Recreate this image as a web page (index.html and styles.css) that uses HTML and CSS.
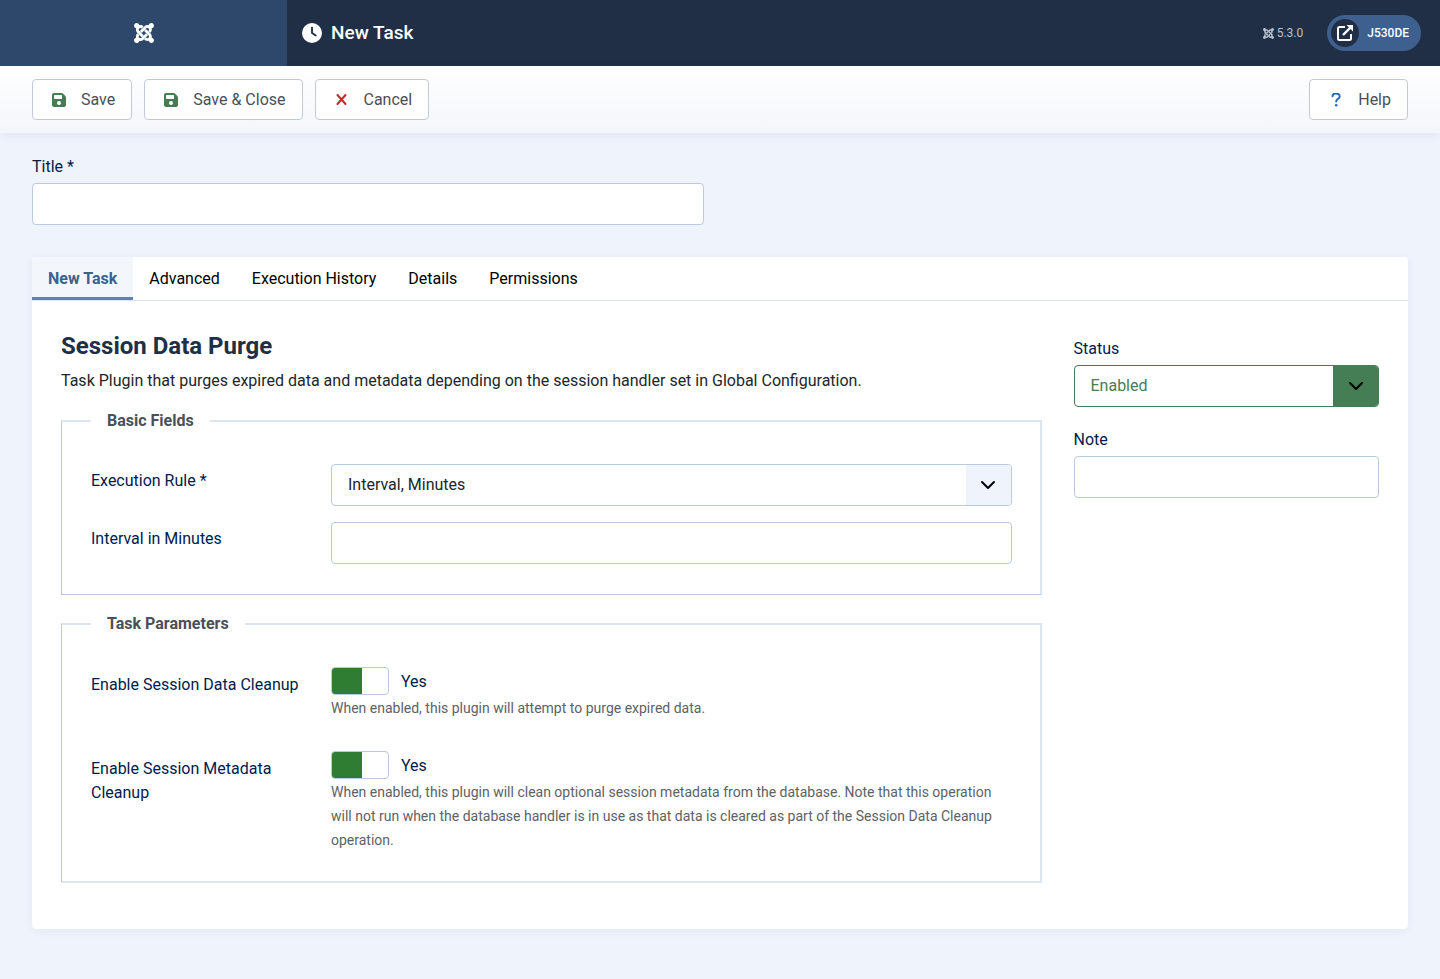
FILE: index.html
```html
<!DOCTYPE html>
<html lang="en">
<head>
<meta charset="utf-8">
<title>New Task</title>
<link rel="stylesheet" href="styles.css">
</head>
<body>
<svg class="defs" aria-hidden="true">
  <symbol id="joomla" viewBox="0 32 448 448"><path fill="currentColor" d="M.6 92.1C.6 58.8 27.4 32 60.4 32c30 0 54.5 21.9 59.2 50.2 32.6-7.6 67.1.6 96.5 30l-44.3 44.3c-20.5-20.5-42.6-16.3-55.4-3.5-14.3 14.3-14.3 37.9 0 52.2l99.5 99.5-44 44.3c-87.7-87.2-49.7-49.7-99.8-99.7-26.8-26.5-35-64.8-24.8-98.9C20.4 144.6.6 120.7.6 92.1zm129.5 116.4l44.3 44.3c10-10 89.7-89.7 99.7-99.8 14.3-14.3 37.6-14.3 51.9 0 12.8 12.8 17 35-3.5 55.4l44 44.3c31.2-31.2 38.5-67.6 28.9-101.2 29.2-4.1 51.9-29.2 51.9-59.5 0-33.2-26.8-60.1-59.8-60.1-30.3 0-55.4 22.5-59.5 51.6-33.8-9.9-71.7-1.5-98.3 25.1-18.3 19.1-71.1 71.5-99.6 99.9zm266.3 152.2c8.2-32.7-.9-68.5-26.3-93.9-11.8-12.2 5 4.7-99.5-99.7l-44.3 44.3 99.7 99.7c14.3 14.3 14.3 37.6 0 51.9-12.8 12.8-35 17-55.4-3.5l-44 44.3c27.6 30.2 68 38.8 102.7 28 5.5 27.4 29.7 48.1 58.9 48.1 33 0 59.8-26.8 59.8-60.1 0-30.2-22.5-55-51.6-59.1zm-84.3-53.1l-44-44.3c-87 86.4-50.4 50.4-99.7 99.8-14.3 14.3-37.6 14.3-51.9 0-13.1-13.4-16.9-35.3 3.2-55.4l-44-44.3c-30.2 30.2-38 65.2-29.5 98.3-26.7 6-46.2 29.9-46.2 58.2C0 453.2 26.8 480 59.8 480c28.6 0 52.5-19.8 58.6-46.7 32.7 8.2 68.5-.6 94.2-26 32.1-32 12.2-12.4 99.5-99.7z"/></symbol>
  <symbol id="floppy" viewBox="0 32 448 448"><path fill="currentColor" d="M64 32C28.7 32 0 60.7 0 96V416c0 35.3 28.7 64 64 64H384c35.3 0 64-28.7 64-64V173.3c0-17-6.7-33.3-18.7-45.3L352 50.7C340 38.7 323.7 32 306.7 32H64zm0 96c0-17.7 14.3-32 32-32H288c17.7 0 32 14.3 32 32v64c0 17.7-14.3 32-32 32H96c-17.7 0-32-14.3-32-32V128zM224 288a64 64 0 1 1 0 128 64 64 0 1 1 0-128z"/></symbol>
  <symbol id="chevron" viewBox="0 0 16 16"><path fill="none" stroke="currentColor" stroke-width="2" stroke-linecap="round" stroke-linejoin="round" d="M2 5l6 6 6-6"/></symbol>
</svg>

<header class="header">
  <a class="brand" href="#" aria-label="Home"><svg class="icon-20"><use href="#joomla"/></svg></a>
  <div class="page-title">
    <svg class="icon-20" viewBox="0 0 512 512" aria-hidden="true"><path fill="currentColor" d="M256 0a256 256 0 1 1 0 512A256 256 0 1 1 256 0zM232 120V256c0 8 4 15.500 10.700 20l96 64c11 7.400 25.900 4.400 33.300-6.700s4.400-25.900-6.700-33.300L280 243.200V120c0-13.300-10.700-24-24-24s-24 10.700-24 24z"/></svg>
    <h1 class="page-name">New Task</h1>
  </div>
  <div class="version"><svg class="icon-11" aria-hidden="true"><use href="#joomla"/></svg><span>5.3.0</span></div>
  <a class="site-link" href="#">
    <span class="site-icon"><svg viewBox="0 0 18 18" aria-hidden="true"><path fill="none" stroke="currentColor" stroke-width="2" d="M9 3H3.500Q2 3 2 4.500V14.500Q2 16 3.500 16H13.500Q15 16 15 14.500V10"/><path fill="none" stroke="currentColor" stroke-width="2.400" d="M7 11l8-8"/><path fill="currentColor" d="M10.500 1H17v6.500z"/></svg></span>
    <span>J530DE</span>
  </a>
</header>

<div class="toolbar">
  <button class="btn" type="button"><svg class="btn-icon green"><use href="#floppy"/></svg>Save</button>
  <button class="btn" type="button"><svg class="btn-icon green"><use href="#floppy"/></svg>Save &amp; Close</button>
  <button class="btn" type="button"><svg class="btn-icon red" viewBox="0 0 14 14"><path fill="none" stroke="currentColor" stroke-width="2" stroke-linecap="round" d="M2.500 2l8 9M10.500 2l-8 9"/></svg>Cancel</button>
  <button class="btn btn-help" type="button"><svg class="btn-icon blue" viewBox="0 0 14 14"><path fill="none" stroke="currentColor" stroke-width="2" stroke-linecap="round" d="M3.500 3.300C3.500 1.300 5 .5 6.800 .5 9 .5 10.700 1.400 10.700 3.400 10.700 5.800 7.200 5.800 7.200 8.500"/><circle cx="7.200" cy="12.200" r="1.300" fill="currentColor"/></svg>Help</button>
</div>

<main class="main">
  <div class="title-field">
    <label class="label" for="title">Title *</label>
    <input class="control" id="title" type="text" required>
  </div>

  <section class="card">
    <div class="tabs" role="tablist">
      <button class="tab tab-active" type="button" role="tab" aria-selected="true">New Task</button>
      <button class="tab" type="button" role="tab" aria-selected="false">Advanced</button>
      <button class="tab" type="button" role="tab" aria-selected="false">Execution History</button>
      <button class="tab" type="button" role="tab" aria-selected="false">Details</button>
      <button class="tab" type="button" role="tab" aria-selected="false">Permissions</button>
    </div>

    <div class="panel" role="tabpanel">
      <div class="panel-main">
        <h2 class="heading">Session Data Purge</h2>
        <p class="intro">Task Plugin that purges expired data and metadata depending on the session handler set in Global Configuration.</p>

        <fieldset class="group">
          <legend class="legend">Basic Fields</legend>
          <div class="row">
            <label class="label row-label" for="rule">Execution Rule *</label>
            <div class="select">
              <select class="control select-control" id="rule"><option>Interval, Minutes</option></select>
              <span class="select-arrow"><svg class="chevron"><use href="#chevron"/></svg></span>
            </div>
          </div>
          <div class="row">
            <label class="label row-label" for="interval">Interval in Minutes</label>
            <input class="control" id="interval" type="text">
          </div>
        </fieldset>

        <fieldset class="group group-params">
          <legend class="legend">Task Parameters</legend>
          <div class="row">
            <label class="label row-label" for="data">Enable Session Data Cleanup</label>
            <div>
              <div class="switch"><input class="toggle" id="data" type="checkbox" role="switch" checked><span>Yes</span></div>
              <p class="hint">When enabled, this plugin will attempt to purge expired data.</p>
            </div>
          </div>
          <div class="row">
            <label class="label row-label" for="meta">Enable Session Metadata Cleanup</label>
            <div>
              <div class="switch"><input class="toggle" id="meta" type="checkbox" role="switch" checked><span>Yes</span></div>
              <p class="hint">When enabled, this plugin will clean optional session metadata from the database. Note that this operation will not run when the database handler is in use as that data is cleared as part of the Session Data Cleanup operation.</p>
            </div>
          </div>
        </fieldset>
      </div>

      <aside class="panel-side">
        <div class="side-field">
          <label class="label" for="status">Status</label>
          <div class="select select-success">
            <select class="control select-control" id="status"><option>Enabled</option></select>
            <span class="select-arrow"><svg class="chevron"><use href="#chevron"/></svg></span>
          </div>
        </div>
        <div class="side-field">
          <label class="label" for="note">Note</label>
          <input class="control" id="note" type="text">
        </div>
      </aside>
    </div>
  </section>
</main>
</body>
</html>
```
FILE: styles.css
```css
*, *::before, *::after { box-sizing: border-box; }

body {
  margin: 0;
  background: #eff3fc;
  color: #22262a;
  font: 16px/24px Roboto, "Liberation Sans", sans-serif;
}

button, input, select { font: inherit; }

.defs { position: absolute; width: 0; height: 0; }

.icon-20 { width: 20px; height: 20px; }
.icon-11 { width: 11px; height: 11px; }

.header {
  display: flex;
  align-items: center;
  height: 66px;
  padding-right: 19px;
  background: #212f46;
  color: #fff;
}
.brand {
  display: flex;
  align-items: center;
  justify-content: center;
  width: 287px;
  height: 100%;
  background: #2e486b;
  color: #fff;
}
.page-title { display: flex; align-items: center; gap: 9px; margin: 0 auto 0 15px; }
.page-name { margin: 0; font-size: 19px; font-weight: 500; }
.version { display: flex; align-items: center; gap: 3px; margin-right: 24px; color: #b6c0ce; font-size: 12px; }
.site-link {
  display: flex;
  align-items: center;
  gap: 8px;
  height: 36px;
  padding: 0 12px 0 4px;
  border-radius: 18px;
  background: #3d608f;
  color: #fff;
  font-size: 12px;
  font-weight: 500;
  text-decoration: none;
}
.site-icon {
  display: flex;
  align-items: center;
  justify-content: center;
  width: 28px;
  height: 28px;
  border-radius: 50%;
  background: #212f46;
}
.site-icon svg { width: 18px; height: 18px; }

.toolbar {
  display: flex;
  gap: 12px;
  padding: 13px 32px;
  background: linear-gradient(#fff, #f4f6fb);
  box-shadow: 0 3px 10px rgba(30, 60, 110, .07);
}
.btn {
  display: flex;
  align-items: center;
  gap: 15px;
  height: 41px;
  padding: 0 16px 0 19px;
  border: 1px solid #c2cad9;
  border-radius: 4px;
  background: #fff;
  color: #495057;
}
.btn-help { margin-left: auto; }
.btn-icon { width: 14px; height: 14px; }
.green { color: #457d54; }
.red { color: #c52827; }
.blue { color: #2a69b8; }

.main { padding: 22px 32px 50px; }

.label { display: block; color: #001b4c; }
.control {
  display: block;
  width: 100%;
  height: 42px;
  padding: 0 16px;
  border: 1px solid #b8c9e0;
  border-radius: 4px;
  background: #fff;
  color: #22262a;
}

.title-field { width: calc(50% - 16px); margin-bottom: 32px; }
.title-field .control, .side-field .control { margin: 0; }
.title-field .label, .side-field .label { margin-bottom: 4px; }

.card {
  border-radius: 4px;
  background: #fff;
  box-shadow: 0 2px 10px rgba(30, 70, 130, .06);
}
.tabs { display: flex; border-bottom: 1px solid #dbe4f0; }
.tab {
  height: 43px;
  padding: 0 16px;
  border: 0;
  background: none;
  color: #000;
}
.tab-active {
  border-radius: 4px 0 0;
  background: #f3f7fb;
  box-shadow: inset 0 -3px #6380ab;
  color: #3d608f;
  font-weight: 700;
}

.panel {
  display: grid;
  grid-template-columns: calc(75% - 8px) calc(25% - 24px);
  gap: 32px;
  padding: 29px 29px 46px;
}
.heading { margin: 0 0 7px; color: #212f46; font-size: 24px; line-height: 32px; font-weight: 700; }
.intro { margin: 0 0 16px; }

.group {
  display: grid;
  gap: 16px;
  min-width: 0;
  margin: 0 0 17px;
  padding: 31px 28px 30px 29px;
  border: solid;
  border-width: 2px 2px 1px 1px;
  border-color: #dce5f1 #dce5f1 #b8c9e0 #b8c9e0;
}
.group-params {
  gap: 31px;
  margin: 0;
  padding-bottom: 29px;
  border-bottom: 2px solid #dce5f1;
}
.legend { padding: 0 16px; color: #495057; font-weight: 700; }
.row { display: grid; grid-template-columns: 208px 1fr; column-gap: 32px; }
.row-label { padding-top: 5px; }
.group-params .row-label { padding-top: 6px; }

.select { display: grid; grid-template-columns: 1fr 46px; }
.select-control { grid-area: 1 / 1 / 2 / 3; appearance: none; }
.select-arrow {
  grid-area: 1 / 2;
  display: flex;
  align-items: center;
  justify-content: center;
  margin: 1px 1px 1px 0;
  border-radius: 0 3px 3px 0;
  background: #eff3fb;
  color: #000;
  pointer-events: none;
}
.chevron { width: 16px; height: 16px; }
.select-success .control { border-color: #457d54; color: #457d54; }
.select-success .select-arrow { background: #457d54; }

.switch { display: flex; align-items: center; gap: 12px; height: 28px; color: #001b4c; }
.switch span { padding-top: 2px; }
.toggle {
  appearance: none;
  width: 58px;
  height: 28px;
  margin: 0;
  border: 1px solid #b8c9e0;
  border-radius: 4px;
  background: #fff;
}
.toggle:checked { background: linear-gradient(90deg, #2f7d32 30px, #fff 30px); }
.hint { margin: 1px 0 0; color: #5c6268; font-size: 14px; }

.panel-side { display: grid; align-content: start; gap: 21px; padding-top: 7px; }
```
